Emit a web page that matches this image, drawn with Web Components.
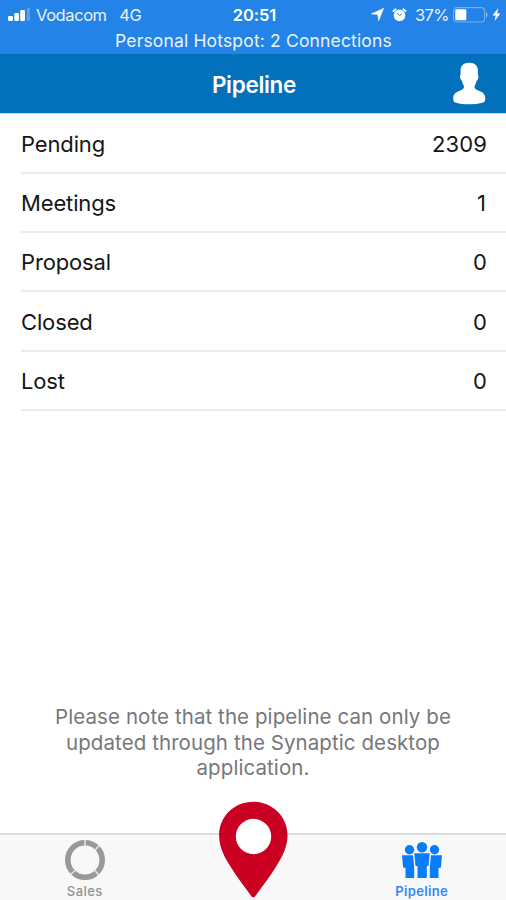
<!DOCTYPE html>
<html lang="en">
<head>
<meta charset="utf-8">
<title>Pipeline</title>
<style>
html,body{margin:0;height:100%}
body{font-family:Inter,"Liberation Sans",sans-serif;background:#fff;overflow:hidden}
</style>
</head>
<body>
<pipeline-app></pipeline-app>
<script>
function define(name, html) {
  const t = document.createElement('template');
  t.innerHTML = html;
  customElements.define(name, class extends HTMLElement {
    constructor() {
      super();
      this.attachShadow({ mode: 'open' }).append(t.content.cloneNode(true));
    }
  });
}

define('status-bar', `
<style>
:host{display:block;height:54px;background:#2383e6;color:#e9f3ff;font-size:16.5px;line-height:26px}
.top{display:grid;grid-template-columns:1fr auto 1fr;height:28px;align-items:center;padding:1px 5px 0 8px;box-sizing:border-box}
.left,.right{display:flex;align-items:center}
.right{justify-content:flex-end}
.carrier{margin-left:5px;letter-spacing:-.42px}.net{margin-left:12.5px;letter-spacing:-.3px}
.time{font-weight:600;color:#fff;letter-spacing:-.1px}
.pct{margin:0 4px 0 8px;letter-spacing:-.55px}
.note{text-align:center;font-size:17.5px;line-height:25px;letter-spacing:.16px;padding-left:1px}
svg{display:block;flex:none}
</style>
<div class="top">
  <div class="left">
    <svg width="23" height="14" viewBox="0 0 23 14"><g fill="#fff"><rect x="0" y="8" width="5" height="5" rx="1.2"/><rect x="6.3" y="5" width="4.6" height="8" rx="1.2"/><rect x="12.2" y="2" width="4.8" height="11" rx="1.2"/></g><rect x="18.8" y="0" width="3.2" height="13" rx="1" fill="#fff" opacity=".25"/></svg>
    <span class="carrier">Vodacom</span><span class="net">4G</span>
  </div>
  <span class="time">20:51</span>
  <div class="right">
    <svg width="13" height="13" viewBox="0 0 13 13"><path d="M12.7.3 7.7 12.8 6.7 6.5.2 5.9Z" fill="#fff" stroke="#fff" stroke-width=".5" stroke-linejoin="round"/></svg>
    <svg style="margin-left:8px" width="15" height="14" viewBox="0 0 15 14"><circle cx="7.5" cy="7.4" r="5.8" fill="#fff"/><path d="M1.5 3 3.6 1.3M13.5 3 11.4 1.3" stroke="#fff" stroke-width="2" stroke-linecap="round"/><path d="M5.2 5 7.5 7.5 9.6 6.3" stroke="#2383e6" stroke-width="1" fill="none"/></svg>
    <span class="pct">37%</span>
    <svg width="36" height="16" viewBox="0 0 36 16"><rect x=".6" y=".6" width="31" height="14.4" rx="3.2" fill="none" stroke="#74aff2" stroke-width="1.1"/><rect x="2.3" y="2.3" width="11" height="11" rx="1" fill="#fff"/><path d="M33 5.2q3 2.6 0 5.2z" fill="#8fc0f7"/></svg>
    <svg style="margin-left:3px" width="9" height="13" viewBox="0 0 9 13"><path d="M6.2 0 .5 7.4h3.2L2.7 13 8.4 5.6H5.2Z" fill="#fff"/></svg>
  </div>
</div>
<div class="note">Personal Hotspot: 2 Connections</div>`);

define('nav-bar', `
<style>
:host{display:grid;grid-template-columns:1fr auto 1fr;align-items:center;height:60px;box-sizing:border-box;background:#0370bc;border-bottom:1px solid #b9dbf5;color:#fff;padding:0 19px 0 21px}
.title{font-size:22.5px;font-weight:600;letter-spacing:-.3px;padding-top:1px}
svg{justify-self:end;display:block}
</style>
<span></span><span class="title"><slot></slot></span>
<svg width="35" height="43" viewBox="0 0 35 43"><path d="M17.200.8C23 .8 26 3.800 25.900 9v3.800c.8.700.7 2.500.2 4-.4 1.300-1 1.800-1.600 2.100-.4 2-1 3.500-1.900 4.800v1.800c.5 1.800 2.200 2.600 4.800 3.600 4.200 1.600 5.900 3.800 5.900 7.600 0 2.300-.8 3.500-3 4.100Q25 42.300 17.200 42.300 9 42.300 4.200 40.800C2 40.200 1.200 39 1.200 36.700c0-3.800 1.700-6 5.900-7.600 2.600-1 4.300-1.800 4.800-3.600v-1.800c-.9-1.300-1.500-2.800-1.900-4.800-.6-.3-1.200-.8-1.600-2.100-.5-1.500-.6-3.300.2-4V9C8.400 3.800 11.400.8 17.200.8Z" fill="#fff"/></svg>`);

define('stage-row', `
<style>
:host{display:flex;justify-content:space-between;align-items:center;height:59.3px;box-sizing:border-box;margin-left:21px;padding:1px 19px 0 0;border-bottom:2px solid #ebebeb;color:#161616;font-size:22px;letter-spacing:-.14px}
::slotted(b){font-weight:400;letter-spacing:.1px}
</style>
<slot></slot><slot name="count"></slot>`);

define('tab-item', `
<style>
:host{display:flex;flex-direction:column;align-items:center;justify-content:flex-end;width:168.6px;box-sizing:border-box;padding:0 0 1px 1px;color:#929292;font-size:13px;font-weight:500;line-height:16px;letter-spacing:.45px}
:host([active]){color:#3088fb;font-weight:600;padding-left:0;letter-spacing:.35px}
::slotted(svg){display:block;margin-bottom:2px}
</style>
<slot name="icon"></slot><span><slot></slot></span>`);

define('tab-bar', `
<style>
:host{display:flex;justify-content:space-between;height:67px;box-sizing:border-box;background:#f8f8f8;border-top:2px solid #dcdcdc}
</style>
<slot></slot>`);

define('pipeline-app', `
<style>
:host{display:flex;flex-direction:column;width:506px;height:900px}
main{flex:1;display:flex;flex-direction:column;justify-content:space-between}
.stages{padding-top:.6px}
p{margin:0 40px 52px;text-align:center;color:#77777b;font-size:20.5px;line-height:25.7px;letter-spacing:.08px}
.pin{align-self:flex-end;margin-bottom:2px}
svg{display:block}
</style>
<status-bar></status-bar>
<nav-bar>Pipeline</nav-bar>
<main>
  <div class="stages">
    <stage-row>Pending<b slot="count">2309</b></stage-row>
    <stage-row>Meetings<b slot="count" style="margin-right:1px">1</b></stage-row>
    <stage-row>Proposal<b slot="count">0</b></stage-row>
    <stage-row>Closed<b slot="count">0</b></stage-row>
    <stage-row>Lost<b slot="count">0</b></stage-row>
  </div>
  <p>Please note that the pipeline can only be<br>updated through the Synaptic desktop<br>application.</p>
</main>
<tab-bar>
  <tab-item>
    <svg slot="icon" width="42" height="42" viewBox="0 0 42 42"><circle cx="21" cy="21" r="17.2" fill="none" stroke="#999" stroke-width="5.6"/><path d="M21 0v8M31.3 11 35.5 6M31 31.5l4 5M11 31.5l-4.5 4" stroke="#f8f8f8" stroke-width="1.6" opacity=".8"/></svg>
    Sales
  </tab-item>
  <svg class="pin" width="70" height="97" viewBox="0 0 70 97"><path d="M35.3.7C16.300.7 1.100 15.500 1.100 34.200c0 11.800 5.200 21.600 11.800 32C19.800 77 27.300 87 33.600 95.400q1.700 1.800 3.400 0C43.300 87 50.800 77 57.700 66.200c6.600-10.400 11.800-20.200 11.800-32C69.500 15.500 54.300.7 35.300.7Z" fill="#c90022"/><circle cx="35.5" cy="35.500" r="17.7" fill="#fff"/></svg>
  <tab-item active>
    <svg slot="icon" width="42" height="40" viewBox="0 0 42 40"><g fill="#087cfb"><circle cx="21" cy="6.3" r="5.2"/><circle cx="8.5" cy="8.7" r="4.7"/><circle cx="33.5" cy="8.7" r="4.7"/><path d="M13.3 12.3h15.4L27.5 25h-1.7v12H16.5V25h-2Z"/><path d="M1 14.2h11l1.2 11.6V37H4.5V27l-2.4-.5ZM41 14.2H30l-1.2 11.6V37h8.7V27l2.4-.5Z"/></g></svg>
    Pipeline
  </tab-item>
</tab-bar>`);
</script>
</body>
</html>
